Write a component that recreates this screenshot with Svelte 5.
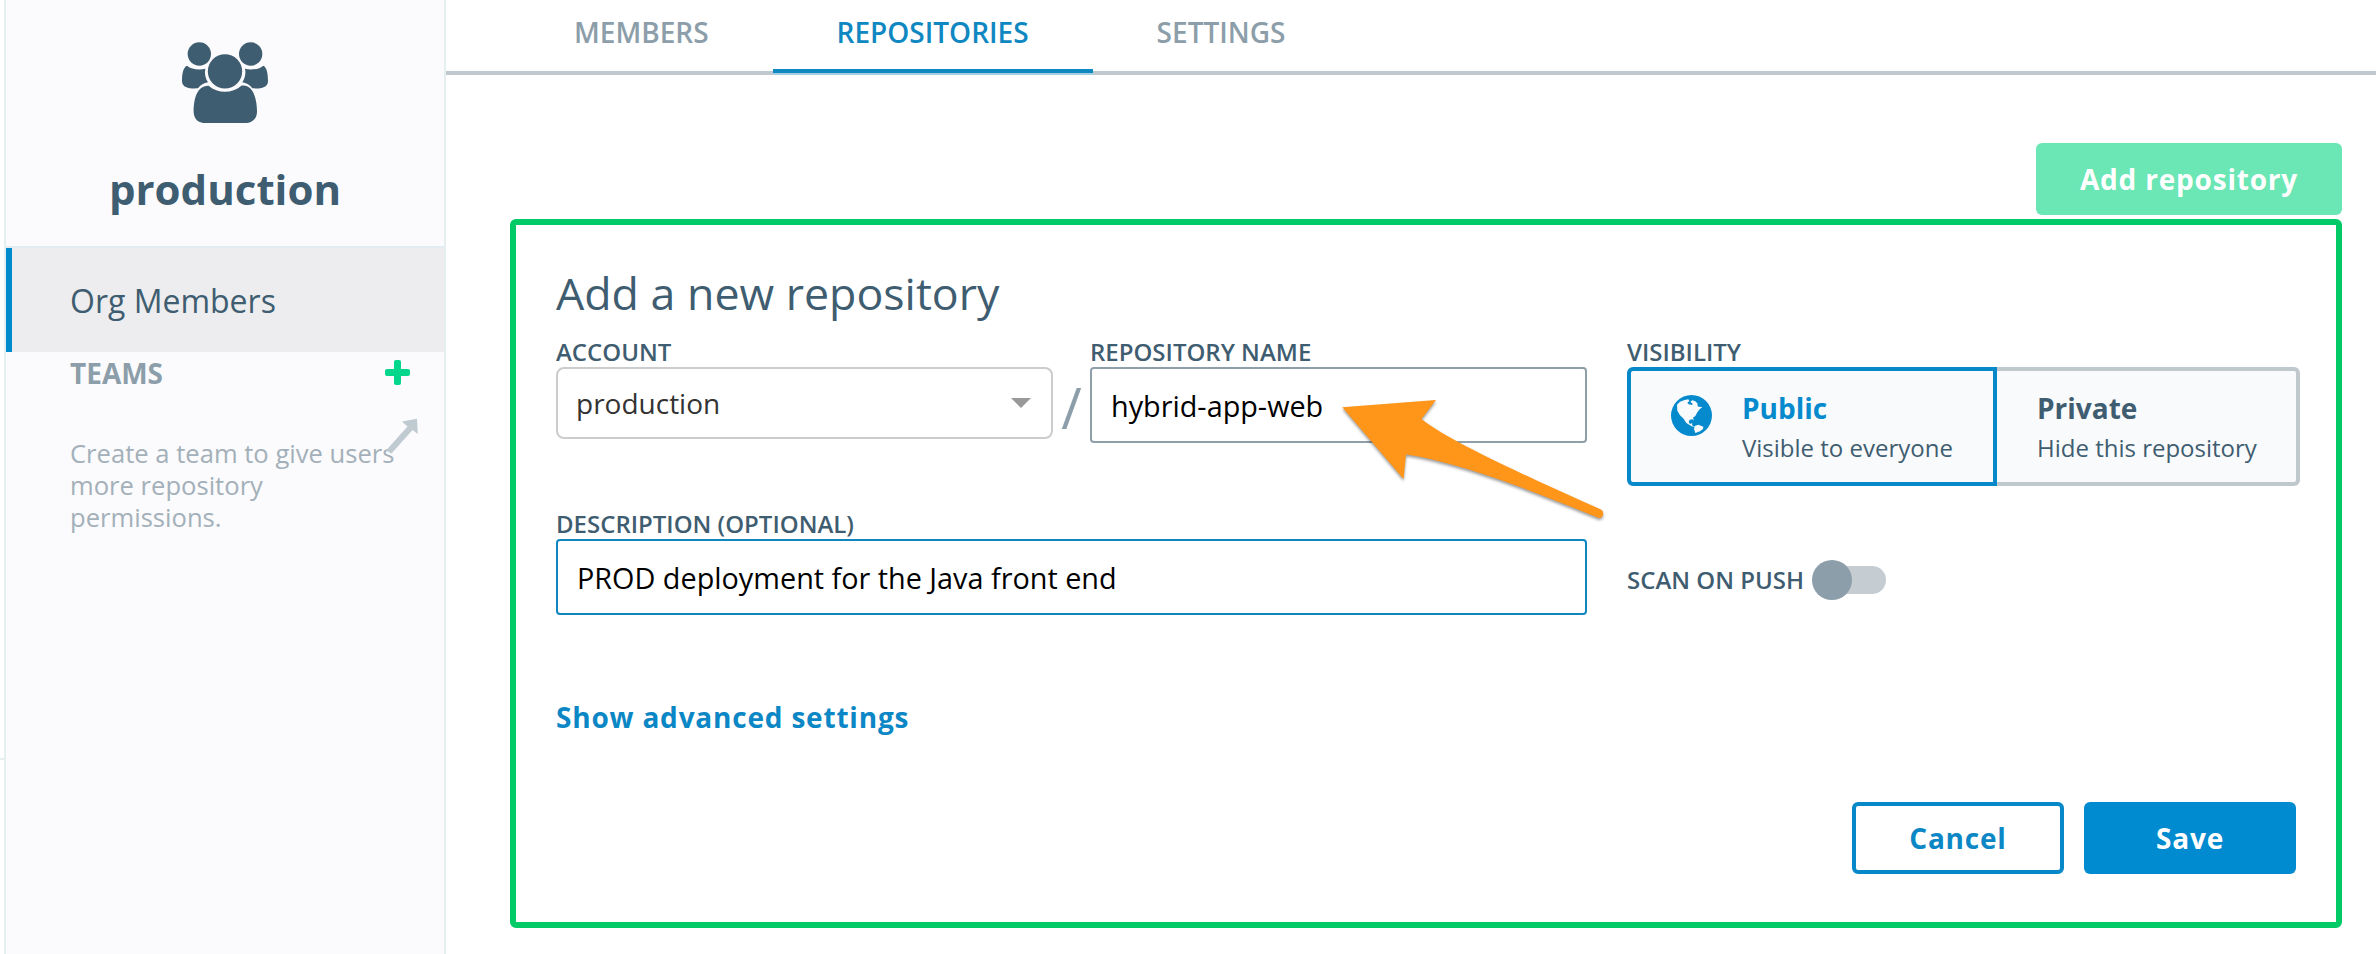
<script>
  const tabs = [
    { label: 'MEMBERS', active: false },
    { label: 'REPOSITORIES', active: true },
    { label: 'SETTINGS', active: false }
  ];
</script>

<div class="page">
  <div class="gutter"></div>
  <aside class="sidebar">
    <header class="org">
      <svg class="group" viewBox="546 125 258 243" width="86" height="81" fill="#3f5d70">
        <circle cx="598" cy="161" r="35" />
        <circle cx="752" cy="161" r="35" />
        <path d="M561 196c12 11 38 14 55 9-3 14 0 29 8 41-12 2-23 8-30 18-20 1-48 1-48-22 0-20 3-41 15-46z" />
        <path d="M790 196c-12 11-38 14-55 9 3 14 0 29-8 41 12 2 23 8 30 18 20 1 47 1 47-22 0-20-3-41-14-46z" />
        <circle cx="675" cy="213" r="51.5" />
        <path d="M626 256c27 24 70 24 98 0 40-5 47 50 47 78 0 22-16 34-36 34H617c-22 0-36-12-36-34 0-34 8-79 45-78z" />
      </svg>
      <h1>production</h1>
    </header>
    <div class="item">Org Members</div>
    <div class="teams">
      <span>TEAMS</span>
      <svg width="25" height="25" viewBox="0 0 25 25" fill="#04d68b">
        <rect x="9" y="0" width="7" height="25" rx="2" /><rect x="0" y="9" width="25" height="7" rx="2" />
      </svg>
    </div>
    <div class="hint">
      <p>Create a team to give users more repository permissions.</p>
      <svg class="pointer" width="34" height="36" viewBox="385 418 34 36" fill="#c0cad1">
        <path d="M417 418.7 402 421.5 407.5 426.5 386 450.5 391.5 453.5 412.5 430 417.8 434z" />
      </svg>
    </div>
  </aside>

  <main>
    <nav>
      {#each tabs as tab}
        <div class="tab" class:active={tab.active}><span>{tab.label}</span></div>
      {/each}
    </nav>

    <div class="toolbar"><button class="add">Add repository</button></div>

    <section class="card">
      <h2>Add a new repository</h2>
      <div class="row first">
        <div class="field">
          <div class="label">ACCOUNT</div>
          <div class="select">
            <span>production</span>
            <svg width="20" height="10" viewBox="0 0 20 10" fill="#999"><path d="M0 0H20L10 10z" /></svg>
          </div>
        </div>
        <div class="slash">/</div>
        <div class="field">
          <div class="label">REPOSITORY NAME</div>
          <div class="input">hybrid-app-web</div>
          <svg class="arrow" width="270" height="130" viewBox="1340 395 270 130">
            <path
              d="M1342.3 407.3 1436 400 1421.500 419C1450 442 1535 480 1601 509.500A4.600 4.600 0 0 1 1599 518C1540 494 1460 462 1406 454.500L1403.500 479z"
              fill="#ff9519"
            />
          </svg>
        </div>
        <div class="visibility">
          <div class="label">VISIBILITY</div>
          <div class="options">
            <div class="option public">
              <svg class="globe" width="41" height="41" viewBox="153 105 123 123">
                <circle cx="214.500" cy="166.500" r="61.500" fill="#068ace" />
                <path
                  fill="#f9fafc"
                  d="M172 152l-1-18 9-9 14-5 11-2 3 5-6 5 4 5 10 2 2-4-7-6 6-4 9 3 7 7-1 4 3 5 12 1-8 7-7 9-6 11-7 5 3 9-4-4-9 1-3 7 4 6 7-3-1 6 8 7-9-3-16-10-8-13-11-10z"
                />
                <path fill="#f9fafc" d="M224 198l11-4 15 6-1 7-9 7-14 5-4-12z" />
              </svg>
              <div class="copy"><b>Public</b><small>Visible to everyone</small></div>
            </div>
            <div class="option private">
              <div class="copy"><b>Private</b><small>Hide this repository</small></div>
            </div>
          </div>
        </div>
      </div>

      <div class="row second">
        <div class="field wide">
          <div class="label">DESCRIPTION (OPTIONAL)</div>
          <div class="input focused">PROD deployment for the Java front end</div>
        </div>
        <div class="scan">
          <span class="label">SCAN ON PUSH</span>
          <div class="toggle"><i></i></div>
        </div>
      </div>

      <div class="advanced">Show advanced settings</div>

      <footer>
        <button class="cancel">Cancel</button>
        <button class="save">Save</button>
      </footer>
    </section>
  </main>
</div>

<style>
  :global(body) { background: #fff; }
  * { box-sizing: border-box; }
  .page {
    display: flex;
    width: 2376px;
    height: 954px;
    overflow: hidden;
    font-family: "Open Sans", sans-serif;
    color: #3f5d70;
    white-space: nowrap;
  }
  .gutter { width: 4px; height: 760px; border-bottom: 2px solid #e6eeef; }
  .sidebar {
    width: 442px;
    border: solid #e6eff0;
    border-width: 0 2px;
    background: #fbfbfd;
  }
  .org {
    height: 248px;
    padding-top: 42px;
    border-bottom: 2px solid #e2ecf1;
    display: flex;
    flex-direction: column;
    align-items: center;
  }
  .group { display: block; }
  h1 { margin: 36px 0 0; font-size: 42px; line-height: 60px; font-weight: 700; }
  .item {
    height: 104px;
    border-left: 6px solid #008bce;
    background: #ededef;
    padding-left: 58px;
    font-size: 32px;
    line-height: 105px;
  }
  .teams {
    display: flex;
    justify-content: space-between;
    align-items: center;
    height: 40px;
    padding: 0 34px 0 64px;
    font-size: 28px;
    line-height: 40px;
    font-weight: 700;
    color: #8c9ea9;
  }
  .teams span { padding-top: 2px; }
  .hint { position: relative; padding: 46px 40px 0 64px; }
  .hint p { margin: 0; width: 330px; white-space: normal; font-size: 25.6px; line-height: 32px; color: #a3b0b9; }
  .pointer { position: absolute; left: 379px; top: 26px; }

  main { flex: 1; }
  nav { display: flex; height: 75px; padding-left: 64px; border-bottom: 4px solid #bfc8cd; }
  .tab {
    height: 73px;
    padding: 12px 64px 0;
    font-size: 28px;
    line-height: 40px;
    font-weight: 600;
    color: #8c9ea9;
  }
  .active { color: #0f87c1; border-bottom: 4px solid #0f87c1; box-shadow: 0 2px #a5cee3; }

  button {
    height: 72px;
    padding: 0;
    border: 0;
    border-radius: 6px;
    font: 700 28px/40px "Open Sans", sans-serif;
    letter-spacing: 0.8px;
  }
  .toolbar { display: flex; justify-content: flex-end; padding: 68px 34px 4px 0; }
  .add { width: 306px; background: #6be6b5; color: #fff; }

  .card {
    width: 1832px;
    height: 709px;
    margin-left: 64px;
    padding: 38px 36px 0 40px;
    border: 6px solid #02ca66;
    border-radius: 6px;
  }
  h2 { margin: 0; font-size: 44.7px; line-height: 60px; font-weight: 400; }
  .row { display: flex; }
  .first { margin-top: 14px; height: 172px; }
  .label { font-size: 24px; line-height: 30px; font-weight: 600; }
  .field { position: relative; width: 497px; }
  .select {
    display: flex;
    align-items: center;
    justify-content: space-between;
    height: 72px;
    padding: 0 20px 0 18px;
    border: 2px solid #ccc;
    border-radius: 8px;
    font-size: 28px;
    color: #333;
  }
  .slash { width: 37px; padding-top: 32px; text-align: center; font-size: 56px; line-height: 76px; color: #8c9ea9; }
  .input {
    height: 76px;
    padding-left: 19px;
    border: 2px solid #8f9fa9;
    border-radius: 4px;
    font-size: 28.8px;
    line-height: 73px;
    color: #000;
  }
  .arrow { position: absolute; left: 250px; top: 58px; filter: drop-shadow(0 2px 1.5px rgba(0, 0, 0, 0.4)); }
  .visibility { margin-left: 40px; width: 673px; }
  .options { display: flex; height: 119px; }
  .option { display: flex; background: #f9fafc; border: 4px solid #bfc8cd; }
  .public { width: 370px; border-color: #0788c8; border-radius: 6px 0 0 6px; padding-left: 40px; }
  .private { width: 303px; border-left: 0; border-radius: 0 6px 6px 0; padding-left: 40px; }
  .globe { margin: 24px 30px 0 0; }
  .copy { display: flex; flex-direction: column; padding-top: 17px; }
  b { font-size: 28px; line-height: 40px; }
  .public b { color: #068ace; }
  small { font-size: 24px; line-height: 40px; }
  .wide { width: 1031px; }
  .focused { border-color: #1086c0; }
  .scan { display: flex; align-items: center; height: 40px; margin: 51px 0 0 40px; }
  .toggle { position: relative; display: flex; align-items: center; width: 74px; height: 40px; margin-left: 8px; }
  .toggle::before { content: ""; width: 70px; height: 28px; margin-left: 4px; border-radius: 14px; background: #c5ccd2; }
  .toggle i { position: absolute; left: 0; top: 0; width: 40px; height: 40px; border-radius: 50%; background: #8c9ea9; }
  .second { height: 107px; }
  .advanced { margin-top: 81px; font-size: 28px; line-height: 40px; font-weight: 700; letter-spacing: 0.8px; color: #0c87c5; }
  footer { display: flex; justify-content: flex-end; gap: 20px; padding: 65px 4px 0 0; }
  footer button { width: 212px; }
  .cancel { border: 4px solid #0788c8; background: #fff; color: #0c87c5; }
  .save { background: #008bd0; color: #fff; }
</style>
